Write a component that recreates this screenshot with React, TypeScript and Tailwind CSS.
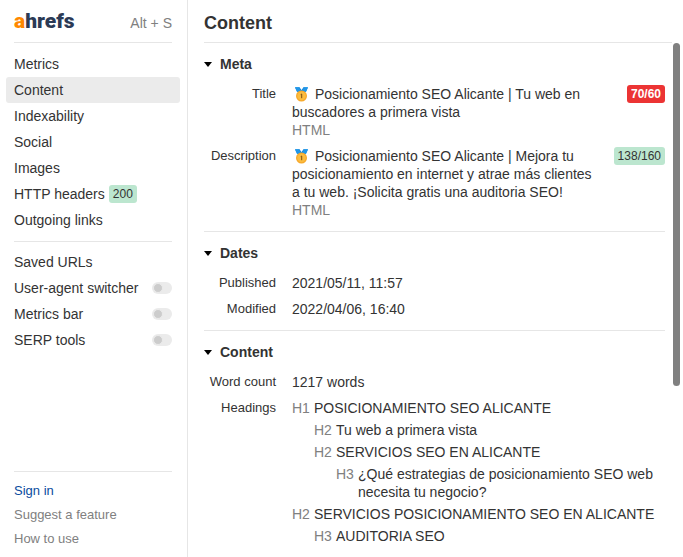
import { useState } from "react";
import type { ReactNode } from "react";

const pages = ["Metrics", "Content", "Indexability", "Social", "Images", "HTTP headers", "Outgoing links"];

const tools = ["User-agent switcher", "Metrics bar", "SERP tools"];

const headings = [
    { level: "H1", text: "POSICIONAMIENTO SEO ALICANTE", indent: "" },
    { level: "H2", text: "Tu web a primera vista", indent: "pl-[22px]" },
    { level: "H2", text: "SERVICIOS SEO EN ALICANTE", indent: "pl-[22px]" },
    { level: "H3", text: "¿Qué estrategias de posicionamiento SEO web necesita tu negocio?", indent: "pl-11" },
    { level: "H2", text: "SERVICIOS POSICIONAMIENTO SEO EN ALICANTE", indent: "" },
    { level: "H3", text: "AUDITORIA SEO", indent: "pl-[22px]" },
];

function Medal() {
    return (
        <svg viewBox="0 0 19 18" className="mr-1 inline-block h-[18px] w-[19px] align-top" aria-hidden="true">
            <path d="M3 2.200h4.500L9.500 5l2-2.800H16L14 7H5z" fill="#2196e8" />
            <path d="M7 2.200 9.500 6 12 2.200l1.200 2.300L11.500 7h-4L5.800 4.500z" fill="#14639f" />
            <path d="M3 2.200h4l2.200 3.300L7.500 7 4.500 5.800zM16 2.200h-4L9.800 5.500 11.500 7l3-1.200z" fill="#2196e8" />
            <circle cx="9.500" cy="11" r="5.500" fill="#f7a92b" />
            <circle cx="9.500" cy="11" r="4.200" fill="#fbbc3f" />
            <path d="M8.700 9.600 9.700 9V13.200" stroke="#7a4f12" strokeWidth="1" fill="none" />
        </svg>
    );
}

function Badge({ tone, children }: { tone: "good" | "bad"; children: ReactNode }) {
    return (
        <span
            className={
                tone === "bad"
                    ? "h-[18px] shrink-0 rounded-[3px] bg-[#ec3434] px-1 text-xs font-bold leading-[18px] text-white"
                    : "h-[18px] shrink-0 rounded-[3px] bg-[#bce6cf] px-1 text-xs leading-[18px] text-[#333333]"
            }
        >
            {children}
        </span>
    );
}

function Section({ title, children }: { title: string; children: ReactNode }) {
    const [open, setOpen] = useState(true);

    return (
        <section className="border-b border-[#e6e6e6] pt-2 pb-3 last:border-b-0">
            <h2>
                <button
                    type="button"
                    aria-expanded={open}
                    onClick={() => setOpen(!open)}
                    className="flex h-[26px] items-center gap-2 text-sm font-bold"
                >
                    <svg viewBox="0 0 8 5" className={open ? "h-[5px] w-2" : "h-[5px] w-2 -rotate-90"} aria-hidden="true">
                        <path d="M0 0h8L4 5z" fill="#000000" />
                    </svg>
                    {title}
                </button>
            </h2>
            {open && <dl className="flex flex-col gap-2 pt-2">{children}</dl>}
        </section>
    );
}

function Row({ label, badge, children }: { label: string; badge?: ReactNode; children: ReactNode }) {
    return (
        <div className="flex">
            <dt className="mr-4 w-[72px] shrink-0 text-right text-[13px] leading-[18px]">{label}</dt>
            <dd className="flex min-w-0 flex-1 justify-between gap-3 leading-[18px]">
                <div className="min-w-0">{children}</div>
                {badge}
            </dd>
        </div>
    );
}

function Sidebar() {
    const [active, setActive] = useState("Content");

    return (
        <aside className="flex w-[188px] shrink-0 flex-col border-r border-[#e6e6e6] pr-[7px] pl-1.5">
            <div className="mx-2 flex h-[43px] items-center justify-between border-b border-[#e6e6e6]">
                <a href="#" className="font-[Roboto,sans-serif] text-[21px] leading-6 font-black text-[#2b3a55]">
                    <span className="text-[#ff8800]">a</span>hrefs
                </a>
                <span className="pt-1 text-[#808080]">Alt + S</span>
            </div>

            <nav className="py-2">
                {pages.map((page) => (
                    <button
                        key={page}
                        type="button"
                        onClick={() => setActive(page)}
                        className={
                            page === active
                                ? "flex h-[26px] w-full items-center gap-1 rounded-[3px] bg-[#ebebeb] px-2"
                                : "flex h-[26px] w-full items-center gap-1 rounded-[3px] px-2"
                        }
                    >
                        {page}
                        {page === "HTTP headers" && <Badge tone="good">200</Badge>}
                    </button>
                ))}
            </nav>

            <div className="mx-2 border-t border-[#e6e6e6] pt-[7px]">
                <a href="#" className="flex h-[26px] items-center">
                    Saved URLs
                </a>
                {tools.map((tool) => (
                    <label key={tool} className="flex h-[26px] items-center justify-between">
                        {tool}
                        <input
                            type="checkbox"
                            role="switch"
                            className="flex h-3 w-5 appearance-none items-center rounded-full bg-[#ebebeb] px-px before:h-2.5 before:w-2.5 before:rounded-full before:border before:border-[#ebebeb] before:bg-[#cccccc] checked:justify-end checked:bg-[#bce6cf]"
                        />
                    </label>
                ))}
            </div>

            <div className="mx-2 mt-auto flex flex-col border-t border-[#e6e6e6] pt-[7px] pb-1.5 text-[13px] leading-6 text-[#808080]">
                <a href="#" className="text-[#0a4b9e]">Sign in</a>
                <a href="#">Suggest a feature</a>
                <a href="#">How to use</a>
            </div>
        </aside>
    );
}

export default function App() {
    return (
        <div className="flex h-screen overflow-hidden bg-white font-['Liberation_Sans',Arial,sans-serif] text-sm text-[#333333]">
            <Sidebar />

            <main className="flex min-w-0 flex-1 flex-col pr-[3px] pl-4">
                <header className="mr-2 flex h-[43px] shrink-0 items-center border-b border-[#e6e6e6]">
                    <h1 className="pt-1 text-lg font-bold">Content</h1>
                </header>

                <div className="flex min-h-0 flex-1">
                    <div className="min-w-0 flex-1 overflow-hidden pr-2">
                        <Section title="Meta">
                            <Row label="Title" badge={<Badge tone="bad">70/60</Badge>}>
                                <p>
                                    <Medal />
                                    Posicionamiento SEO Alicante | Tu web en buscadores a primera vista
                                </p>
                                <p className="text-[#808080]">HTML</p>
                            </Row>
                            <Row label="Description" badge={<Badge tone="good">138/160</Badge>}>
                                <p>
                                    <Medal />
                                    Posicionamiento SEO Alicante | Mejora tu posicionamiento en internet y atrae más clientes a tu
                                    web. ¡Solicita gratis una auditoria SEO!
                                </p>
                                <p className="text-[#808080]">HTML</p>
                            </Row>
                        </Section>

                        <Section title="Dates">
                            <Row label="Published">2021/05/11, 11:57</Row>
                            <Row label="Modified">2022/04/06, 16:40</Row>
                        </Section>

                        <Section title="Content">
                            <Row label="Word count">1217 words</Row>
                            <Row label="Headings">
                                <ul className="flex flex-col gap-1">
                                    {headings.map((heading) => (
                                        <li key={heading.text} className={heading.indent}>
                                            <div className="flex">
                                                <span className="w-[22px] shrink-0 text-[#808080]">{heading.level}</span>
                                                <span>{heading.text}</span>
                                            </div>
                                        </li>
                                    ))}
                                </ul>
                            </Row>
                        </Section>
                    </div>

                    <div className="w-[7px] shrink-0">
                        <div className="h-2/3 rounded-full bg-[#808080]" />
                    </div>
                </div>
            </main>
        </div>
    );
}
